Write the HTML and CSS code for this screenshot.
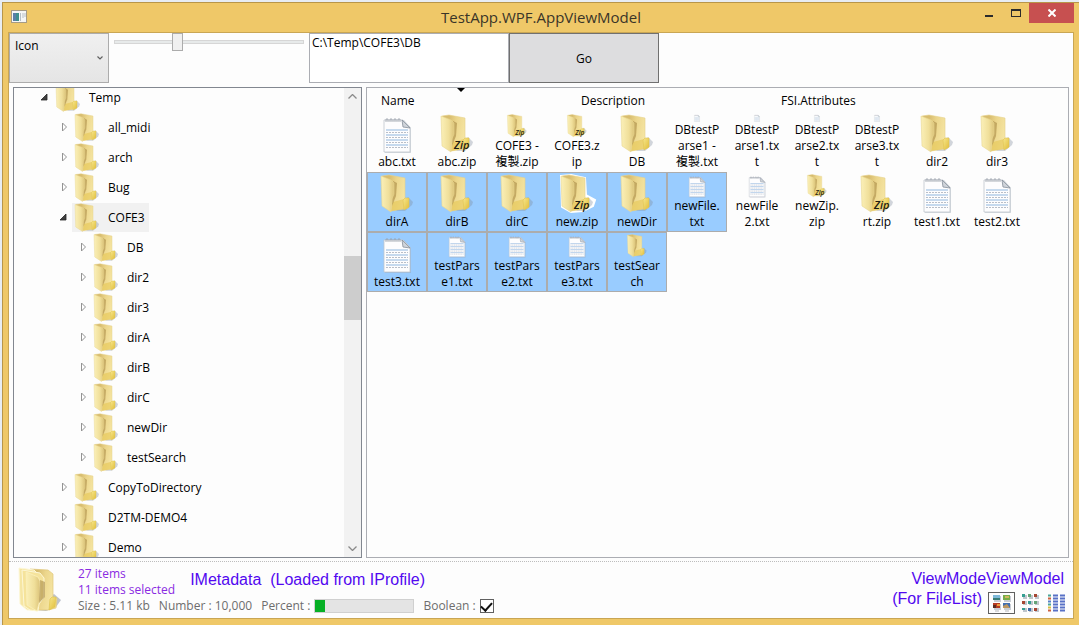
FILE: index.html
```html
<!DOCTYPE html>
<html lang="en">
<head>
<meta charset="utf-8">
<title>TestApp.WPF.AppViewModel</title>
<link rel="stylesheet" href="styles.css">
</head>
<body>
<svg class="defs" aria-hidden="true">
  <defs>
    <linearGradient id="flapFill" x1="0" y1="0" x2="1" y2="0"><stop offset="0" stop-color="#fbf0b8"/><stop offset=".6" stop-color="#f0df9a"/><stop offset="1" stop-color="#dcc47a"/></linearGradient>
    <linearGradient id="backFill" x1=".3" y1="0" x2="1" y2=".2"><stop offset="0" stop-color="#d8bd70"/><stop offset=".4" stop-color="#ecd68c"/><stop offset="1" stop-color="#f6e6a4"/></linearGradient>
    <linearGradient id="tabFill" x1="0" y1="0" x2="1" y2="1"><stop offset="0" stop-color="#f7e78c"/><stop offset="1" stop-color="#e0bc38"/></linearGradient>
  </defs>
  <symbol id="folder" viewBox="0 0 40 40">
    <path d="M31 23L36 28L35 31L28 37L19 37Z" fill="#7f8a9c" opacity=".35"/>
    <path d="M5 2L12 1L28 4V25H31V34L26 35L14 37Z" fill="url(#backFill)" stroke="#e6d28a" stroke-width=".6"/>
    <path d="M16 28L27 25V35L14 37Z" fill="#e6c651" opacity=".6"/>
    <path d="M16 7L20 9L19 22L15 32Z" fill="#9c7c38" opacity=".5"/>
    <path d="M4 2L14 6L17 9V20L15 25L14 38L5 32Z" fill="url(#flapFill)" stroke="#e8d791" stroke-width=".6"/>
    <path d="M26 26L28 24H32V33L27 36Z" fill="url(#tabFill)" stroke="#e0c553" stroke-width=".6"/>
  </symbol>
  <symbol id="zip" viewBox="0 0 40 40">
    <use href="#folder"/>
    <text x="17" y="35" class="zip-mark">Zip</text>
  </symbol>
  <symbol id="zipSel" viewBox="0 0 40 40">
    <path d="M4 2L14 1L28 4L29 21L38 26L36 32L26 37L14 38L5 33Z" fill="#fff" stroke="#fff" stroke-width="2"/>
    <use href="#zip"/>
  </symbol>
  <symbol id="text" viewBox="0 0 40 40">
    <path d="M8 6H27L34 14V39H8Z" fill="#8d98a8" opacity=".35"/>
    <path d="M7 6H26L33 13V38H7Z" fill="#fdfdfe" stroke="#bfc5cd" stroke-width=".8"/>
    <path d="M25 6L33 14L26 13Z" fill="#cfd4da" stroke="#868f9b" stroke-width=".8"/>
    <path d="M9 8V5H11V8M13 8V5H15V8M17 8V5H19V8M21 8V5H23V8" fill="none" stroke="#989ea8" stroke-width=".8"/>
    <path d="M9 16H31M9 21H31M9 26H31M9 31H31" stroke="#8fb6de" stroke-width="1"/>
    <path d="M9 18.500H31M9 23.500H31M9 28.500H31M9 33.500H31" stroke="#b9bec8" stroke-width="1" stroke-dasharray="2 1"/>
  </symbol>
  <symbol id="open" viewBox="0 0 14 14"><path d="M8 4V10H2Z" fill="#404040" stroke="#262626" stroke-width=".8"/></symbol>
  <symbol id="closed" viewBox="0 0 14 14"><path d="M4.500 3V11L8.500 7Z" fill="#fff" stroke="#949494"/></symbol>
</svg>

<div class="window">
  <header class="titlebar">
    <svg class="app-icon" viewBox="0 0 16 14" aria-hidden="true"><rect x=".5" y=".5" width="15" height="12" fill="#f5f6f6" stroke="#a59b86"/><rect x="2" y="3" width="6" height="8" fill="#3f8f8d"/><path d="M2 3h3v8h-3z" fill="#5a7fa8"/><path d="M9.500 3v8M12 3v5M14 3v4" stroke="#b7bfc6"/></svg>
    <h1 class="title">TestApp.WPF.AppViewModel</h1>
    <div class="window-buttons">
      <button class="win-btn" aria-label="Minimize"><svg width="10" height="10" viewBox="0 0 10 10"><path d="M1 7h8v2H1z" fill="#2b2b2b"/></svg></button>
      <button class="win-btn" aria-label="Maximize"><svg width="10" height="10" viewBox="0 0 10 10"><path d="M0 1h10v8H0zM1 3v5h8V3z" fill="#2b2b2b" fill-rule="evenodd"/></svg></button>
      <button class="win-btn close" aria-label="Close"><svg width="8" height="8" viewBox="0 0 8 8"><path d="M.5.5L7.500 7.500M7.500.5L.5 7.500" stroke="#fff" stroke-width="2"/></svg></button>
    </div>
  </header>

  <main class="content">
    <div class="toolbar">
      <div class="combo">
        <select aria-label="View mode"><option>Icon</option></select>
        <svg class="combo-arrow" viewBox="0 0 6 4" aria-hidden="true"><path d="M.5.5L3 3L5.500.5" fill="none" stroke="#606060" stroke-width="1.200"/></svg>
      </div>
      <input class="slider" type="range" min="0" max="100" value="32" aria-label="Icon size">
      <input class="path" type="text" value="C:\Temp\COFE3\DB" aria-label="Path">
      <button class="go">Go</button>
    </div>

    <div class="panes">
      <nav class="tree-pane" aria-label="Folders">
        <ul class="tree">
          <li><div class="node"><button class="expander" aria-label="Collapse"><svg><use href="#open"/></svg></button><a class="label" href="#"><svg><use href="#folder"/></svg>Temp</a></div>
            <ul>
              <li><div class="node"><button class="expander" aria-label="Expand"><svg><use href="#closed"/></svg></button><a class="label" href="#"><svg><use href="#folder"/></svg>all_midi</a></div></li>
              <li><div class="node"><button class="expander" aria-label="Expand"><svg><use href="#closed"/></svg></button><a class="label" href="#"><svg><use href="#folder"/></svg>arch</a></div></li>
              <li><div class="node"><button class="expander" aria-label="Expand"><svg><use href="#closed"/></svg></button><a class="label" href="#"><svg><use href="#folder"/></svg>Bug</a></div></li>
              <li><div class="node"><button class="expander" aria-label="Collapse"><svg><use href="#open"/></svg></button><a class="label current" href="#"><svg><use href="#folder"/></svg>COFE3</a></div>
                <ul>
                  <li><div class="node"><button class="expander" aria-label="Expand"><svg><use href="#closed"/></svg></button><a class="label" href="#"><svg><use href="#folder"/></svg>DB</a></div></li>
                  <li><div class="node"><button class="expander" aria-label="Expand"><svg><use href="#closed"/></svg></button><a class="label" href="#"><svg><use href="#folder"/></svg>dir2</a></div></li>
                  <li><div class="node"><button class="expander" aria-label="Expand"><svg><use href="#closed"/></svg></button><a class="label" href="#"><svg><use href="#folder"/></svg>dir3</a></div></li>
                  <li><div class="node"><button class="expander" aria-label="Expand"><svg><use href="#closed"/></svg></button><a class="label" href="#"><svg><use href="#folder"/></svg>dirA</a></div></li>
                  <li><div class="node"><button class="expander" aria-label="Expand"><svg><use href="#closed"/></svg></button><a class="label" href="#"><svg><use href="#folder"/></svg>dirB</a></div></li>
                  <li><div class="node"><button class="expander" aria-label="Expand"><svg><use href="#closed"/></svg></button><a class="label" href="#"><svg><use href="#folder"/></svg>dirC</a></div></li>
                  <li><div class="node"><button class="expander" aria-label="Expand"><svg><use href="#closed"/></svg></button><a class="label" href="#"><svg><use href="#folder"/></svg>newDir</a></div></li>
                  <li><div class="node"><button class="expander" aria-label="Expand"><svg><use href="#closed"/></svg></button><a class="label" href="#"><svg><use href="#folder"/></svg>testSearch</a></div></li>
                </ul>
              </li>
              <li><div class="node"><button class="expander" aria-label="Expand"><svg><use href="#closed"/></svg></button><a class="label" href="#"><svg><use href="#folder"/></svg>CopyToDirectory</a></div></li>
              <li><div class="node"><button class="expander" aria-label="Expand"><svg><use href="#closed"/></svg></button><a class="label" href="#"><svg><use href="#folder"/></svg>D2TM-DEMO4</a></div></li>
              <li><div class="node"><button class="expander" aria-label="Expand"><svg><use href="#closed"/></svg></button><a class="label" href="#"><svg><use href="#folder"/></svg>Demo</a></div></li>
            </ul>
          </li>
        </ul>
        <div class="scrollbar">
          <button aria-label="Scroll up"><svg width="9" height="5" viewBox="0 0 9 5"><path d="M.5 4.500L4.500.5L8.500 4.500" fill="none" stroke="#8a8a8a" stroke-width="1.300"/></svg></button>
          <div class="track"><div class="thumb"></div></div>
          <button aria-label="Scroll down"><svg width="9" height="5" viewBox="0 0 9 5"><path d="M.5.5L4.500 4.500L8.500.5" fill="none" stroke="#8a8a8a" stroke-width="1.300"/></svg></button>
        </div>
      </nav>

      <section class="list-pane" aria-label="Files">
        <div class="columns">
          <button class="sorted">Name</button>
          <button>Description</button>
          <button>FSI.Attributes</button>
        </div>
        <ul class="files">
          <li><svg><use href="#text"/></svg><span>abc.txt</span></li>
          <li><svg><use href="#zip"/></svg><span>abc.zip</span></li>
          <li><svg><use href="#zip"/></svg><span>COFE3 -<br>複製.zip</span></li>
          <li><svg><use href="#zip"/></svg><span>COFE3.z<br>ip</span></li>
          <li><svg><use href="#folder"/></svg><span>DB</span></li>
          <li><svg><use href="#text"/></svg><span>DBtestP<br>arse1 -<br>複製.txt</span></li>
          <li><svg><use href="#text"/></svg><span>DBtestP<br>arse1.tx<br>t</span></li>
          <li><svg><use href="#text"/></svg><span>DBtestP<br>arse2.tx<br>t</span></li>
          <li><svg><use href="#text"/></svg><span>DBtestP<br>arse3.tx<br>t</span></li>
          <li><svg><use href="#folder"/></svg><span>dir2</span></li>
          <li><svg><use href="#folder"/></svg><span>dir3</span></li>
          <li class="selected"><svg><use href="#folder"/></svg><span>dirA</span></li>
          <li class="selected"><svg><use href="#folder"/></svg><span>dirB</span></li>
          <li class="selected"><svg><use href="#folder"/></svg><span>dirC</span></li>
          <li class="selected"><svg><use href="#zipSel"/></svg><span>new.zip</span></li>
          <li class="selected"><svg><use href="#folder"/></svg><span>newDir</span></li>
          <li class="selected"><svg><use href="#text"/></svg><span>newFile.<br>txt</span></li>
          <li><svg><use href="#text"/></svg><span>newFile<br>2.txt</span></li>
          <li><svg><use href="#zip"/></svg><span>newZip.<br>zip</span></li>
          <li><svg><use href="#zip"/></svg><span>rt.zip</span></li>
          <li><svg><use href="#text"/></svg><span>test1.txt</span></li>
          <li><svg><use href="#text"/></svg><span>test2.txt</span></li>
          <li class="selected"><svg><use href="#text"/></svg><span>test3.txt</span></li>
          <li class="selected"><svg><use href="#text"/></svg><span>testPars<br>e1.txt</span></li>
          <li class="selected"><svg><use href="#text"/></svg><span>testPars<br>e2.txt</span></li>
          <li class="selected"><svg><use href="#text"/></svg><span>testPars<br>e3.txt</span></li>
          <li class="selected"><svg><use href="#folder"/></svg><span>testSear<br>ch</span></li>
        </ul>
      </section>
    </div>

    <footer class="status">
      <svg class="stack-icon" viewBox="0 0 44 48" aria-hidden="true">
        <path d="M36 28L43 34L38 41L28 45L18 44Z" fill="#7f8a9c" opacity=".5"/>
        <path d="M12 3L30 4L35 8L35 32L39 32L38 42L30 44L14 44Z" fill="url(#backFill)" stroke="#dfc678" stroke-width=".7"/>
        <path d="M1 2L16 4L20 8V30L17 44L9 44L2 38Z" fill="#f6e6a3" stroke="#fdf7d6"/>
        <path d="M4 4L22 7L26 12V31L21 38L20 45L12 44L6 40Z" fill="#f5e39b" stroke="#fdf7d6"/>
        <path d="M8 6L20 11L22 15V34L19 45L9 39Z" fill="url(#flapFill)" stroke="#fbf0bb" stroke-width=".8"/>
        <path d="M22 14L27 16V31L21 37Z" fill="#9c7c38" opacity=".5"/>
        <path d="M32 33L34 31H38L37 41L31 44Z" fill="url(#tabFill)" stroke="#e0c553" stroke-width=".7"/>
      </svg>
      <div class="metadata">
        <div class="summary">
          <div class="counts"><div>27 items</div><div>11 items selected</div></div>
          <div class="note">IMetadata&nbsp; (Loaded from IProfile)</div>
        </div>
        <div class="fields">
          <span>Size : 5.11 kb</span>
          <span>Number : 10,000</span>
          <label class="field">Percent : <progress max="100" value="10"></progress></label>
          <label class="field">Boolean : <input type="checkbox" checked></label>
        </div>
      </div>
      <div class="view-modes">
        <div class="note">ViewModeViewModel</div>
        <div class="modes">
          <span class="note">(For FileList)</span>
          <button class="mode active" aria-label="Icons"><svg width="22" height="20" viewBox="0 0 22 20"><path d="M3 3h7v6H3zM13 3h7v6h-7zM3 11h7v6H3zM13 11h7v6h-7z" fill="#c8cdd4"/><path d="M2 2h7v5H2z" fill="#7db8d8"/><path d="M2 5h7v2H2z" fill="#397c75"/><path d="M12 2h7v5h-7z" fill="#78ad49"/><path d="M14 3h4v2h-4z" fill="#d1b85c"/><path d="M2 10h7v5H2z" fill="#b63b22"/><path d="M2 12h3v3H2z" fill="#5a2c20"/><path d="M6 11h3v2H6z" fill="#ee9b3a"/><path d="M12 10h7v5h-7z" fill="#416fb1"/><path d="M12 13l4-2 3 4h-7z" fill="#bc9660"/><path d="M4 18h4M14 18h4" stroke="#b5b5b5"/></svg></button>
          <button class="mode" aria-label="Small icons"><svg width="18" height="20" viewBox="0 0 18 20"><path d="M2 2h4v4H2zM8 2h4v4H8zM14 2h4v4h-4zM2 8h4v4H2zM8 8h4v4H8zM14 8h4v4h-4zM2 15h4v4H2zM8 15h4v4H8zM14 15h4v4h-4z" fill="#bfc5cc"/><path d="M1 1h3v3H1zM7 8h3v3H7zM1 15h3v2H1z" fill="#349e92"/><path d="M7 1h3v3H7zM13 8h3v3h-3z" fill="#65a477"/><path d="M13 1h3v3h-3zM1 8h3v3H1zM13 15h3v3h-3z" fill="#a64532"/><path d="M7 15h3v3H7z" fill="#416ca9"/></svg></button>
          <button class="mode" aria-label="Details"><svg width="20" height="20" viewBox="0 0 20 20"><path d="M6 2.500H11M13 2.500H18M6 5.500H11M13 5.500H18M6 8.500H11M13 8.500H18M6 11.500H11M13 11.500H18M6 14.500H11M13 14.500H18M6 17.500H11M13 17.500H18" stroke="#5871c6" stroke-width="2"/><path d="M1 1.500h3v2H1zM1 10.500h3v2H1z" fill="#4aa697"/><path d="M1 4.500h3v2H1zM1 16.500h3v2H1z" fill="#cc6040"/><path d="M1 7.500h3v2H1z" fill="#567fc6"/><path d="M1 13.500h3v2H1z" fill="#d8bd3f"/></svg></button>
        </div>
      </div>
    </footer>
  </main>
</div>
</body>
</html>
```
FILE: styles.css
```css
* {
  box-sizing: border-box;
}

body {
  margin: 0;
  padding: 2px 0 0 2px;
  height: 100vh;
  overflow: hidden;
  background: #e8edf3;
  color: #000;
  font: 12px/16px "Open Sans", "Noto Sans CJK TC", sans-serif;
}

button,
input,
select {
  margin: 0;
  padding: 0;
  border: 0;
  border-radius: 0;
  background: none;
  color: inherit;
  font: inherit;
}

ul {
  margin: 0;
  padding: 0;
  list-style: none;
}

.defs {
  position: absolute;
  width: 0;
  height: 0;
}

.zip-mark {
  fill: #1c1c14;
  font: italic 600 11px "Open Sans", sans-serif;
}

.window {
  display: flex;
  flex-direction: column;
  height: 100%;
  padding: 0 5px 6px;
  border: solid #b8964a;
  border-width: 1px 0 0 1px;
  background: #efc868;
}

/* Title bar */
.titlebar {
  display: grid;
  grid-template-columns: 1fr auto 1fr;
  height: 29px;
}

.app-icon {
  width: 16px;
  height: 14px;
  margin: 7px 0 0 3px;
}

.title {
  margin: 0;
  color: #3a3528;
  font-size: 15px;
  font-weight: 400;
  line-height: 29px;
}

.window-buttons {
  display: flex;
  justify-content: flex-end;
  align-items: flex-start;
}

.win-btn {
  display: flex;
  align-items: center;
  justify-content: center;
  width: 27px;
  height: 20px;
}

.close {
  width: 45px;
  background: #c75050;
}

/* Client area */
.content {
  display: flex;
  flex: 1;
  flex-direction: column;
  min-height: 0;
  border: 1px solid #c9a654;
  background: #fdfdfd;
}

.toolbar {
  display: flex;
  height: 50px;
}

.combo {
  position: relative;
  width: 100px;
}

.combo select {
  width: 100%;
  height: 100%;
  padding: 0 0 24px 5px;
  border: 1px solid #acacac;
  appearance: none;
  background: linear-gradient(#f0f0f0, #e5e5e5);
}

.combo-arrow {
  position: absolute;
  top: 23px;
  right: 6px;
  width: 6px;
  height: 4px;
}

.slider {
  width: 190px;
  height: 18px;
  margin: 0 5px;
  appearance: none;
}

.slider::-webkit-slider-runnable-track {
  height: 4px;
  border: 1px solid #d6d6d6;
  background: #e7eaea;
}

.slider::-webkit-slider-thumb {
  width: 11px;
  height: 18px;
  margin-top: -8px;
  border: 1px solid #acacac;
  appearance: none;
  background: #f0f0f0;
}

.path {
  width: 200px;
  padding: 0 2px 30px;
  border: 1px solid #abadb3;
  background: #fff;
}

.go {
  width: 150px;
  padding-top: 2px;
  border: 1px solid #707070;
  background: #dddddf;
}

.panes {
  display: flex;
  flex: 1;
  gap: 4px;
  min-height: 0;
  padding: 4px 4px 3px;
}

/* Folder tree */
.tree-pane {
  display: flex;
  width: 349px;
  overflow: hidden;
  border: 1px solid #828790;
}

.tree {
  flex: 1;
  margin-top: -5px;
  padding-left: 25px;
}

.tree ul {
  padding-left: 19px;
}

.node {
  display: flex;
  height: 30px;
}

.expander {
  width: 14px;
  height: 28px;
}

.expander svg {
  display: block;
  width: 14px;
  height: 14px;
}

.label {
  display: flex;
  align-items: center;
  gap: 6px;
  height: 29px;
  padding-right: 4px;
  color: inherit;
  text-decoration: none;
}

.label svg {
  width: 30px;
  height: 30px;
}

.current {
  background: #f1f1f1;
}

.scrollbar {
  display: flex;
  flex-direction: column;
  width: 17px;
  background: #f2f2f2;
}

.scrollbar button {
  display: flex;
  align-items: center;
  justify-content: center;
  height: 17px;
}

.track {
  display: grid;
  flex: 1;
  grid-template-rows: 151fr 64fr 220fr;
}

.thumb {
  grid-row: 2;
  background: #cdcdcd;
}

/* File list */
.list-pane {
  flex: 1;
  border: 1px solid #abadb3;
}

.columns {
  display: flex;
  height: 24px;
}

.columns button {
  position: relative;
  width: 200px;
  padding: 2px 14px 0;
  text-align: left;
}

.sorted::after {
  position: absolute;
  top: 0;
  left: 90px;
  border: 4px solid transparent;
  border-top-color: #000;
  border-bottom: 0;
  content: "";
}

.files {
  display: flex;
  flex-wrap: wrap;
}

.files li {
  display: flex;
  flex-direction: column;
  align-items: center;
  width: 60px;
  height: 60px;
  padding: 1px 0;
  border: 1px solid transparent;
  text-align: center;
  white-space: nowrap;
}

.files svg {
  flex: 1;
  width: 40px;
  min-height: 0;
}

.files .selected {
  border-color: #acacac;
  background: #99ccff;
}

/* Status bar */
.status {
  display: flex;
  padding: 4px 4px 4px 9px;
  border-top: 1px dotted #bdbdbd;
}

.stack-icon {
  width: 44px;
  height: 48px;
}

.metadata {
  flex: 1;
  padding-left: 16px;
}

.summary {
  display: flex;
  align-items: flex-start;
  gap: 15px;
}

.counts {
  color: #8a2be2;
}

.note {
  color: #5208f0;
  font: 16px/20px "Liberation Sans", Arial, sans-serif;
}

.summary .note {
  padding-top: 4px;
}

.fields {
  display: flex;
  gap: 9px;
  color: #6d6d6d;
}

.field {
  display: flex;
  align-items: center;
  gap: 4px;
}

.field progress {
  width: 100px;
  height: 14px;
  border: 1px solid #d0d0d0;
  appearance: none;
  background: #e4e4e4;
}

.field progress::-webkit-progress-bar {
  background: #e4e4e4;
}

.field progress::-webkit-progress-value {
  background: #06b025;
}

.field input {
  display: flex;
  justify-content: center;
  width: 14px;
  height: 14px;
  border: 1px solid #606060;
  appearance: none;
  background: #fff;
}

.field input:checked::after {
  width: 5px;
  height: 9px;
  border: solid #111;
  border-width: 0 2px 2px 0;
  content: "";
  transform: rotate(42deg);
}

.view-modes {
  text-align: right;
}

.view-modes > .note {
  padding: 3px 5px 0 0;
}

.modes {
  display: flex;
  gap: 3px;
}

.mode {
  display: flex;
  align-items: center;
  justify-content: center;
  width: 24px;
  height: 22px;
  margin-top: 3px;
}

.active {
  width: 27px;
  margin-left: 3px;
  border: 1px solid #606060;
}
```
